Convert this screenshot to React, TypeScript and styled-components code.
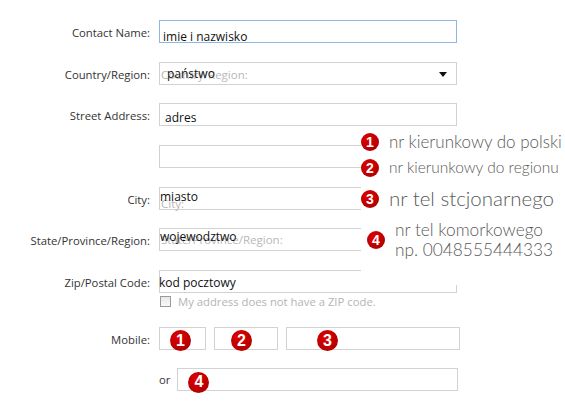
import * as React from 'react';
import styled, { createGlobalStyle } from 'styled-components';

const GlobalStyle = createGlobalStyle`
  html, body {
    margin: 0;
    padding: 0;
    background: #fff;
  }
  body {
    font-family: 'Open Sans', 'Noto Sans', sans-serif;
  }
`;

const Page = styled.div`
  position: relative;
  width: 565px;
  height: 403px;
  overflow: hidden;
  padding-top: 20px;
  box-sizing: border-box;
`;

const Form = styled.div`
  display: flex;
  flex-direction: column;
  gap: 18.67px;
`;

const Row = styled.div`
  display: flex;
  align-items: flex-start;
`;

const Label = styled.div`
  width: 150px;
  height: 23px;
  line-height: 25px;
  text-align: right;
  font-size: 11.3px;
  color: #333;
  margin-right: 9px;
  flex-shrink: 0;
`;

const Column = styled.div`
  display: flex;
  flex-direction: column;
`;

const Field = styled.div<{ $width?: number; $focus?: boolean }>`
  position: relative;
  width: ${(p) => p.$width || 298}px;
  height: 23px;
  box-sizing: border-box;
  border: 1px solid ${(p) => (p.$focus ? '#8fb7e6' : '#d2d2d2')};
  background: #fff;
  flex-shrink: 0;
`;

const Ghost = styled.span<{ $top: number }>`
  position: absolute;
  left: 1px;
  top: ${(p) => p.$top}px;
  font-size: 11.5px;
  line-height: 15px;
  color: #b8b8b8;
  white-space: nowrap;
`;

const Value = styled.span<{ $left: number; $top: number }>`
  position: absolute;
  left: ${(p) => p.$left}px;
  top: ${(p) => p.$top}px;
  font-size: 12px;
  line-height: 15px;
  color: #111;
  white-space: nowrap;
`;

const Arrow = styled.span`
  position: absolute;
  right: 9px;
  top: 9px;
  width: 0;
  height: 0;
  border-left: 4px solid transparent;
  border-right: 4px solid transparent;
  border-top: 5px solid #111;
`;

const CheckLine = styled.div`
  display: flex;
  align-items: center;
  gap: 7px;
  margin-top: 3px;
  height: 12px;
  padding-left: 1px;
  font-size: 11.3px;
  color: #b4b4b4;
`;

const Box = styled.span`
  width: 11px;
  height: 11px;
  box-sizing: border-box;
  border: 1px solid #9a9a9a;
  background: linear-gradient(#e8e8e8, #fafafa);
`;

const Phones = styled.div`
  display: flex;
  gap: 8px;
`;

const OrRow = styled.div`
  display: flex;
  align-items: center;
  padding-left: 159px;
  gap: 7px;
`;

const OrLabel = styled.span`
  font-size: 11.3px;
  color: #333;
`;

const Badge = styled.span<{ $size: number; $font: number }>`
  display: inline-flex;
  align-items: center;
  justify-content: center;
  width: ${(p) => p.$size}px;
  height: ${(p) => p.$size}px;
  border-radius: 50%;
  background: radial-gradient(circle at 40% 35%, #e00000, #b40000 70%, #9a0000);
  color: #fff;
  font-family: 'Liberation Sans', Arial, sans-serif;
  font-weight: bold;
  font-size: ${(p) => p.$font}px;
  flex-shrink: 0;
`;

const PinnedBadge = styled.div<{ $left: number }>`
  position: absolute;
  left: ${(p) => p.$left}px;
  top: 1px;
`;

const Notes = styled.div`
  position: absolute;
  left: 361px;
  top: 128px;
  width: 204px;
  height: 157px;
  background: #fff;
  display: flex;
  flex-direction: column;
`;

const Note = styled.div<{ $height: number; $indent?: number }>`
  display: flex;
  align-items: center;
  gap: 10px;
  height: ${(p) => p.$height}px;
  padding-left: ${(p) => p.$indent || 0}px;
`;

const NoteText = styled.div<{ $size: number }>`
  font-family: Lato, 'DejaVu Sans', sans-serif;
  font-weight: 300;
  font-size: ${(p) => p.$size}px;
  line-height: 1.15;
  color: #5a5a5a;
  white-space: nowrap;
`;

export default function App() {
  return (
    <Page>
      <GlobalStyle />
      <Form>
        <Row>
          <Label>Contact Name:</Label>
          <Field $focus>
            <Value $left={3} $top={8}>imie i nazwisko</Value>
          </Field>
        </Row>
        <Row>
          <Label>Country/Region:</Label>
          <Field>
            <Ghost $top={4}>Country/Region:</Ghost>
            <Value $left={7} $top={3}>państwo</Value>
            <Arrow />
          </Field>
        </Row>
        <Row>
          <Label>Street Address:</Label>
          <Field>
            <Value $left={5} $top={6}>adres</Value>
          </Field>
        </Row>
        <Row>
          <Label />
          <Field />
        </Row>
        <Row>
          <Label>City:</Label>
          <Field>
            <Ghost $top={8}>City:</Ghost>
            <Value $left={0} $top={1}>miasto</Value>
          </Field>
        </Row>
        <Row>
          <Label>State/Province/Region:</Label>
          <Field>
            <Ghost $top={3}>State/Province/Region:</Ghost>
            <Value $left={0} $top={0}>wojewodztwo</Value>
          </Field>
        </Row>
        <Row>
          <Label>Zip/Postal Code:</Label>
          <Column>
            <Field>
              <Value $left={-1} $top={4}>kod pocztowy</Value>
            </Field>
            <CheckLine>
              <Box />
              My address does not have a ZIP code.
            </CheckLine>
          </Column>
        </Row>
        <Row>
          <Label>Mobile:</Label>
          <Phones>
            <Field $width={47}>
              <PinnedBadge $left={10}>
                <Badge $size={21} $font={16}>1</Badge>
              </PinnedBadge>
            </Field>
            <Field $width={64}>
              <PinnedBadge $left={16}>
                <Badge $size={21} $font={16}>2</Badge>
              </PinnedBadge>
            </Field>
            <Field $width={174}>
              <PinnedBadge $left={30}>
                <Badge $size={21} $font={16}>3</Badge>
              </PinnedBadge>
            </Field>
          </Phones>
        </Row>
        <OrRow>
          <OrLabel>or</OrLabel>
          <Field $width={281}>
            <PinnedBadge $left={10}>
              <Badge $size={21} $font={16}>4</Badge>
            </PinnedBadge>
          </Field>
        </OrRow>
      </Form>
      <Notes>
        <Note $height={28}>
          <Badge $size={18} $font={14}>1</Badge>
          <NoteText $size={17}>nr kierunkowy do polski</NoteText>
        </Note>
        <Note $height={24}>
          <Badge $size={18} $font={14}>2</Badge>
          <NoteText $size={15.5}>nr kierunkowy do regionu</NoteText>
        </Note>
        <Note $height={38}>
          <Badge $size={18} $font={14}>3</Badge>
          <NoteText $size={20.5}>nr tel stcjonarnego</NoteText>
        </Note>
        <Note $height={44} $indent={6}>
          <Badge $size={18} $font={14}>4</Badge>
          <NoteText $size={17.3}>
            nr tel komorkowego
            <br />
            np. 0048555444333
          </NoteText>
        </Note>
      </Notes>
    </Page>
  );
}
